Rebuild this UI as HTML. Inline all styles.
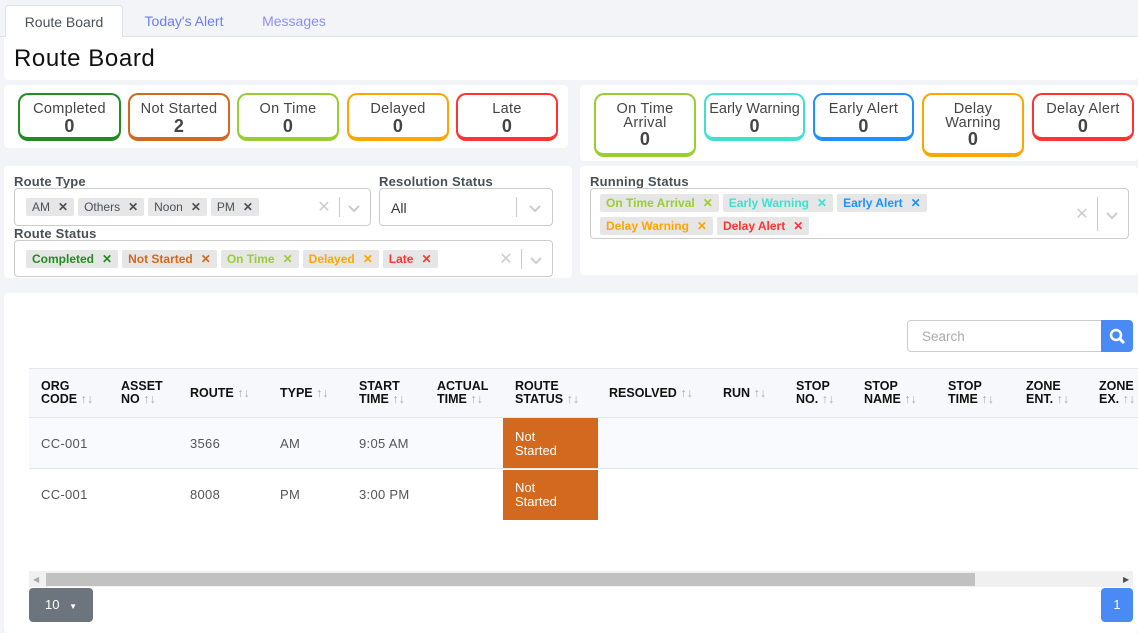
<!DOCTYPE html>
<html><head><meta charset="utf-8"><style>
*{box-sizing:border-box;margin:0;padding:0}
body{width:1138px;height:629px;overflow:hidden;background:#f3f4f8;font-family:"Liberation Sans",sans-serif;position:relative;color:#495057}
.a{position:absolute}
.pan{position:absolute;background:#fff;border-radius:4px}
.tab{position:absolute;top:5px;height:32px;font-size:14px;line-height:32px;text-align:center}
.card{position:absolute;top:93px;height:48px;border:2px solid;border-bottom-width:4px;border-radius:10px;text-align:center;font-size:14.5px;letter-spacing:0.3px;color:#444;line-height:15px;padding-top:7px}
.card b{display:block;font-size:18px;line-height:18px;color:#444}
.lbl{position:absolute;font-size:13px;font-weight:bold;color:#495057;letter-spacing:0.2px}
.sel{position:absolute;border:1px solid #ccc;border-radius:4px;background:#fff}
.chip{display:inline-block;background:#e6e6e6;border-radius:2px;font-size:12px;height:18px;line-height:18px;padding:0 6px;margin-right:4px}
.chip i{font-style:normal;margin-left:8px;font-weight:bold}
.cb{font-weight:bold}
.ctl{position:absolute;right:0;top:0;bottom:0;width:56px}
.ctl .x{position:absolute;left:0;width:20px;text-align:center;color:#ccc;font-size:16px}
.ctl .sep{position:absolute;left:25px;width:1px;background:#ccc}
.ctl .v{position:absolute;left:33px;width:14px;height:14px}
.h{position:absolute;top:380px;font-size:12.5px;font-weight:bold;color:#111;line-height:13px}
.h s{text-decoration:none;color:#aaa;font-weight:normal}
.c{position:absolute;font-size:13px;color:#555;letter-spacing:0.3px}
</style></head><body>
<div class="a" style="left:0;top:36px;width:1138px;height:1px;background:#dee2e6"></div>
<div class="tab" style="left:5px;width:118px;background:#fff;border:1px solid #dee2e6;border-bottom:none;border-radius:4px 4px 0 0;color:#495057">Route Board</div>
<div class="tab" style="left:130px;width:108px;color:#6c7cf5">Today's Alert</div>
<div class="tab" style="left:252px;width:84px;color:#8d8ff5">Messages</div>
<div class="pan" style="left:4px;top:37px;width:1134px;height:43px;border-radius:0 0 4px 4px"></div>
<div class="a" style="left:14px;top:45px;font-size:24px;letter-spacing:0.6px;color:#111">Route Board</div>

<div class="pan" style="left:4px;top:85px;width:564px;height:63px"></div>
<div class="pan" style="left:580px;top:85px;width:558px;height:76px"></div>
<div class="card" style="left:18px;width:103px;border-color:#228b22">Completed<b>0</b></div>
<div class="card" style="left:128px;width:102px;border-color:#d2691e">Not Started<b>2</b></div>
<div class="card" style="left:237px;width:102px;border-color:#9acd32">On Time<b>0</b></div>
<div class="card" style="left:347px;width:102px;border-color:#ffa500">Delayed<b>0</b></div>
<div class="card" style="left:456px;width:102px;border-color:#ff3333">Late<b>0</b></div>
<div class="card" style="left:594px;width:102px;height:64px;border-color:#9acd32;line-height:14px">On Time<br>Arrival<b>0</b></div>
<div class="card" style="left:704px;width:101px;border-color:#40e0d0;letter-spacing:0">Early Warning<b>0</b></div>
<div class="card" style="left:813px;width:101px;border-color:#1e90ff">Early Alert<b>0</b></div>
<div class="card" style="left:922px;width:102px;height:64px;border-color:#ffa500;line-height:14px">Delay<br>Warning<b>0</b></div>
<div class="card" style="left:1032px;width:102px;border-color:#ff3333">Delay Alert<b>0</b></div>

<div class="pan" style="left:4px;top:166px;width:568px;height:112px"></div>
<div class="pan" style="left:580px;top:166px;width:558px;height:109px"></div>
<div class="lbl" style="left:14px;top:174px">Route Type</div>
<div class="sel" style="left:14px;top:188px;width:357px;height:38px"><div class="a" style="left:11px;top:9px;white-space:nowrap"><span class="chip">AM<i>✕</i></span><span class="chip">Others<i>✕</i></span><span class="chip">Noon<i>✕</i></span><span class="chip">PM<i>✕</i></span></div>
<div class="ctl"><span class="x" style="top:8px">✕</span><span class="sep" style="top:8px;height:20px"></span><svg class="v" style="top:12px" viewBox="0 0 14 14"><path d="M2 5l5 5 5-5" stroke="#ccc" stroke-width="2" fill="none"/></svg></div></div>
<div class="lbl" style="left:379px;top:174px">Resolution Status</div>
<div class="sel" style="left:379px;top:188px;width:174px;height:38px"><div class="a" style="left:11px;top:11px;font-size:14px;color:#333">All</div>
<div class="ctl" style="width:36px"><span class="sep" style="left:0;top:8px;height:20px"></span><svg class="v" style="left:12px;top:12px" viewBox="0 0 14 14"><path d="M2 5l5 5 5-5" stroke="#ccc" stroke-width="2" fill="none"/></svg></div></div>
<div class="lbl" style="left:14px;top:226px">Route Status</div>
<div class="sel" style="left:14px;top:240px;width:539px;height:37px"><div class="a cb" style="left:11px;top:9px;white-space:nowrap"><span class="chip" style="color:#228b22">Completed<i>✕</i></span><span class="chip" style="color:#d2691e">Not Started<i>✕</i></span><span class="chip" style="color:#9acd32">On Time<i>✕</i></span><span class="chip" style="color:#ffa500">Delayed<i>✕</i></span><span class="chip" style="color:#ff3333">Late<i>✕</i></span></div>
<div class="ctl"><span class="x" style="top:8px">✕</span><span class="sep" style="top:8px;height:20px"></span><svg class="v" style="top:12px" viewBox="0 0 14 14"><path d="M2 5l5 5 5-5" stroke="#ccc" stroke-width="2" fill="none"/></svg></div></div>
<div class="lbl" style="left:590px;top:174px">Running Status</div>
<div class="sel" style="left:590px;top:188px;width:539px;height:51px"><div class="a cb" style="left:9px;top:2px;width:420px;line-height:23px"><span class="chip" style="color:#9acd32">On Time Arrival<i>✕</i></span><span class="chip" style="color:#40e0d0">Early Warning<i>✕</i></span><span class="chip" style="color:#1e90ff">Early Alert<i>✕</i></span><br><span class="chip" style="color:#ffa500">Delay Warning<i>✕</i></span><span class="chip" style="color:#ff3333">Delay Alert<i>✕</i></span></div>
<div class="ctl"><span class="x" style="top:15px">✕</span><span class="sep" style="top:8px;height:34px"></span><svg class="v" style="top:19px" viewBox="0 0 14 14"><path d="M2 5l5 5 5-5" stroke="#ccc" stroke-width="2" fill="none"/></svg></div></div>

<div class="pan" style="left:4px;top:293px;width:1134px;height:340px"></div>
<div class="a" style="left:907px;top:320px;width:196px;height:32px;border:1px solid #ccc;border-radius:4px 0 0 4px;font-size:13.5px;color:#aaa;padding:8px 14px">Search</div>
<div class="a" style="left:1101px;top:320px;width:32px;height:32px;background:#4a8af4;border-radius:0 4px 4px 0"><svg width="32" height="32" viewBox="0 0 32 32"><circle cx="15" cy="15" r="5" stroke="#fff" stroke-width="2.5" fill="none"/><path d="M19 19l4 4" stroke="#fff" stroke-width="3"/></svg></div>

<div class="a" style="left:29px;top:368px;width:1109px;height:50px;background:#f7f8fb;border-top:1px solid #e3e6ec;border-bottom:1px solid #e3e6ec"></div>
<div class="a" style="left:29px;top:418px;width:1109px;height:51px;background:#f9fafd;border-bottom:1px solid #e3e6ec"></div>
<div class="h" style="left:41px">ORG<br>CODE <s>↑↓</s></div>
<div class="h" style="left:121px">ASSET<br>NO <s>↑↓</s></div>
<div class="h" style="left:190px;top:387px">ROUTE <s>↑↓</s></div>
<div class="h" style="left:280px;top:387px">TYPE <s>↑↓</s></div>
<div class="h" style="left:359px">START<br>TIME <s>↑↓</s></div>
<div class="h" style="left:437px">ACTUAL<br>TIME <s>↑↓</s></div>
<div class="h" style="left:515px">ROUTE<br>STATUS <s>↑↓</s></div>
<div class="h" style="left:609px;top:387px">RESOLVED <s>↑↓</s></div>
<div class="h" style="left:723px;top:387px">RUN <s>↑↓</s></div>
<div class="h" style="left:796px">STOP<br>NO. <s>↑↓</s></div>
<div class="h" style="left:864px">STOP<br>NAME <s>↑↓</s></div>
<div class="h" style="left:948px">STOP<br>TIME <s>↑↓</s></div>
<div class="h" style="left:1026px">ZONE<br>ENT. <s>↑↓</s></div>
<div class="h" style="left:1099px;white-space:nowrap">ZONE<br>EX. <s>↑↓</s></div>

<div class="c" style="left:41px;top:436px">CC-001</div><div class="c" style="left:190px;top:436px">3566</div><div class="c" style="left:280px;top:436px">AM</div><div class="c" style="left:359px;top:436px">9:05 AM</div>
<div class="c" style="left:41px;top:487px">CC-001</div><div class="c" style="left:190px;top:487px">8008</div><div class="c" style="left:280px;top:487px">PM</div><div class="c" style="left:359px;top:487px">3:00 PM</div>
<div class="a" style="left:503px;top:418px;width:95px;height:50px;background:#d2691e;color:#fff;font-size:13px;line-height:14px;padding:12px 12px">Not<br>Started</div>
<div class="a" style="left:503px;top:470px;width:95px;height:50px;background:#d2691e;color:#fff;font-size:13px;line-height:14px;padding:11px 12px">Not<br>Started</div>

<div class="a" style="left:29px;top:571px;width:1104px;height:16px;background:#f0f0f0"></div>
<div class="a" style="left:46px;top:573px;width:929px;height:13px;background:#c1c1c1"></div>
<div class="a" style="left:33px;top:575px;font-size:8px;color:#aaa">◀</div>
<div class="a" style="left:1123px;top:575px;font-size:8px;color:#505050">▶</div>
<div class="a" style="left:29px;top:588px;width:64px;height:34px;background:#6c757d;border-radius:4px;color:#fff;font-size:13px;line-height:34px;padding-left:16px">10 <span style="font-size:8px;margin-left:6px">▼</span></div>
<div class="a" style="left:1101px;top:588px;width:32px;height:34px;background:#4a8af4;border-radius:4px;color:#fff;font-size:13px;line-height:34px;text-align:center">1</div>
</body></html>
